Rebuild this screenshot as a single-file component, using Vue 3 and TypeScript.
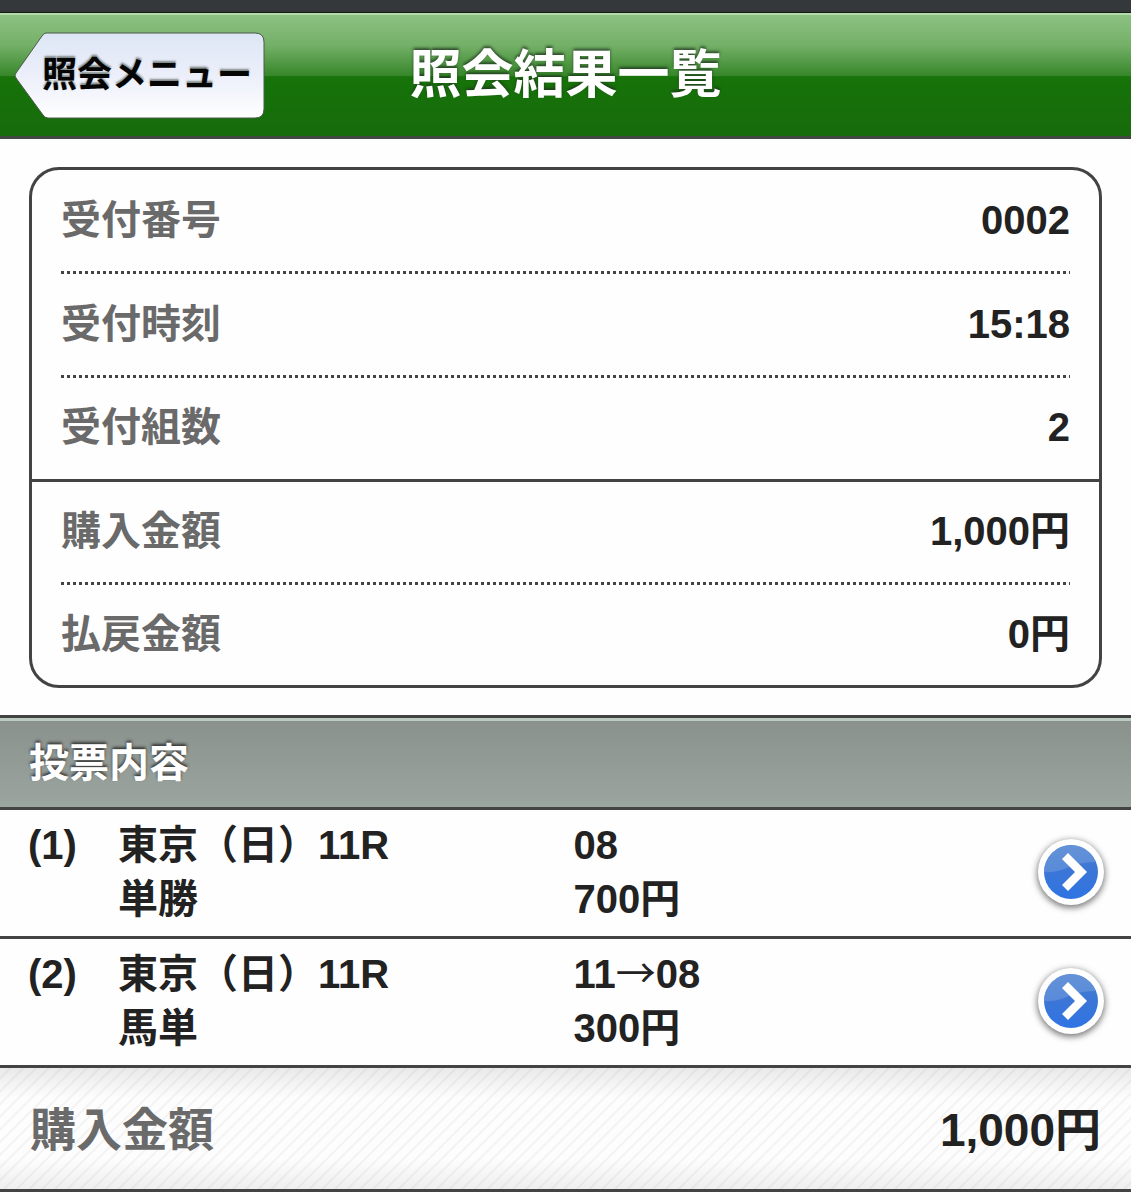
<script setup lang="ts">
interface SummaryItem {
  label: string
  value: string
}

interface Vote {
  no: number
  race: string
  kind: string
  horses: string[]
  amount: string
}

const receipt: SummaryItem[] = [
  { label: '受付番号', value: '0002' },
  { label: '受付時刻', value: '15:18' },
  { label: '受付組数', value: '2' },
]

const money: SummaryItem[] = [
  { label: '購入金額', value: '1,000円' },
  { label: '払戻金額', value: '0円' },
]

const votes: Vote[] = [
  { no: 1, race: '東京（日）11R', kind: '単勝', horses: ['08'], amount: '700円' },
  { no: 2, race: '東京（日）11R', kind: '馬単', horses: ['11', '08'], amount: '300円' },
]
</script>

<template>
  <div class="page">
    <div class="status-strip"></div>
    <header class="header">
      <button type="button" class="back">
        <svg class="back-shape" viewBox="0 0 252 88" aria-hidden="true">
          <defs>
            <linearGradient id="backFill" x1="0" y1="0" x2="0" y2="1">
              <stop offset="0" stop-color="#dde6f5" />
              <stop offset="0.5" stop-color="#eceffa" />
              <stop offset="1" stop-color="#ffffff" />
            </linearGradient>
          </defs>
          <path
            d="M32 1 H241 Q250 1 250 10 V77 Q250 86 241 86 H34 Q31 86 29 83 L2 46 Q0 43 2 41 L28 4 Q30 1 32 1 Z"
            fill="url(#backFill)"
            stroke="#4c5a4c"
            stroke-width="1"
          />
        </svg>
        <span class="back-label">照会メニュー</span>
      </button>
      <h1 class="title">照会結果一覧</h1>
      <span></span>
    </header>

    <main>
      <div class="card">
        <dl class="group receipt">
          <div v-for="item in receipt" :key="item.label" class="item">
            <dt>{{ item.label }}</dt>
            <dd>{{ item.value }}</dd>
          </div>
        </dl>
        <dl class="group money">
          <div v-for="item in money" :key="item.label" class="item">
            <dt>{{ item.label }}</dt>
            <dd>{{ item.value }}</dd>
          </div>
        </dl>
      </div>

      <h2 class="section">投票内容</h2>

      <ul class="votes">
        <li v-for="vote in votes" :key="vote.no" class="vote">
          <span class="no">({{ vote.no }})</span>
          <div>
            <div>{{ vote.race }}</div>
            <div>{{ vote.kind }}</div>
          </div>
          <div>
            <div>
              <template v-for="(horse, i) in vote.horses" :key="horse"><span v-if="i > 0" class="arrow">→</span>{{ horse }}</template>
            </div>
            <div>{{ vote.amount }}</div>
          </div>
          <button type="button" class="detail" :aria-label="`(${vote.no}) ${vote.race}`">
            <svg viewBox="0 0 54 54" aria-hidden="true">
              <defs>
                <linearGradient :id="`disc${vote.no}`" x1="0" y1="0" x2="0" y2="1">
                  <stop offset="0" stop-color="#4a80d2" />
                  <stop offset="0.5" stop-color="#3b76d6" />
                  <stop offset="1" stop-color="#2f74e4" />
                </linearGradient>
                <linearGradient :id="`gloss${vote.no}`" x1="0" y1="0" x2="0" y2="1">
                  <stop offset="0" stop-color="#6f9ad9" />
                  <stop offset="1" stop-color="#6593dc" />
                </linearGradient>
              </defs>
              <circle cx="27" cy="27" r="27" :fill="`url(#disc${vote.no})`" />
              <path
                d="M0 27 A27 27 0 0 1 52 17 Q36 17 25 22 Q13 28 0 27 Z"
                :fill="`url(#gloss${vote.no})`"
                opacity="0.7"
              />
              <path d="M24 8 L43 27 L24 46 L18 40 L31 27 L18 14 Z" fill="#ffffff" />
            </svg>
          </button>
        </li>
      </ul>

      <div class="total">
        <span class="total-label">購入金額</span>
        <span>1,000円</span>
      </div>
    </main>
  </div>
</template>

<style>
body {
  margin: 0;
  background: #fefefe;
}
</style>

<style scoped>
.page {
  font-family: "Liberation Sans", "Noto Sans CJK JP", sans-serif;
  font-size: 40px;
  font-weight: 700;
  line-height: 54px;
  color: #222222;
}

.status-strip {
  height: 12px;
  background: #35383b;
  border-bottom: 1px solid #14200f;
}

.header {
  display: grid;
  grid-template-columns: 1fr auto 1fr;
  align-items: center;
  box-sizing: border-box;
  height: 126px;
  padding: 0 14px;
  border-top: 2px solid #b4dcac;
  border-bottom: 3px solid #414741;
  background: linear-gradient(#8cc182 0%, #74b068 25%, #37872a 50%, #17730a 51%, #166b0a 100%);
}

.back {
  position: relative;
  justify-self: start;
  width: 252px;
  height: 88px;
  padding: 0 0 2px 28px;
  border: 0;
  background: none;
  font: inherit;
  font-size: 35px;
  color: #050505;
  text-align: left;
  white-space: nowrap;
}

.back-shape {
  position: absolute;
  inset: 0;
  width: 100%;
  height: 100%;
}

.back-label {
  position: relative;
  text-shadow: 0 -2px 2px rgba(60, 70, 60, 0.6);
}

.title {
  margin: 0;
  padding-bottom: 2px;
  font-size: 52px;
  line-height: 78px;
  color: #ffffff;
  text-shadow: 0 -2px 3px rgba(30, 50, 30, 0.8);
}

.card {
  margin: 28px 29px 27px;
  border: 3px solid #434343;
  border-radius: 30px;
}

.group {
  margin: 0;
  padding: 0 29px;
}

.receipt {
  border-bottom: 3px solid #434343;
}

.item {
  display: flex;
  justify-content: space-between;
  align-items: center;
  box-sizing: border-box;
  height: 104px;
  padding-bottom: 5px;
}

.money .item {
  height: 103px;
}

.item:last-child {
  height: 101px;
  padding-bottom: 3px;
}

.money .item:last-child {
  height: 100px;
}

.item:not(:last-child) {
  background: repeating-linear-gradient(90deg, #434343 0 3px, transparent 3px 6px) left bottom / 100% 3px no-repeat;
}

.item dt {
  color: #6a6a6a;
}

.item dd {
  margin: 0;
}

.section {
  margin: 0;
  padding: 18px 29px 17px;
  border-top: 3px solid #434343;
  border-bottom: 3px solid #434343;
  background: linear-gradient(#8a918c, #9ba59f);
  box-shadow: inset 0 3px #bccbc2;
  font-size: 40px;
  color: #ffffff;
  text-shadow: 0 -2px 3px rgba(30, 30, 30, 0.8);
}

.votes {
  margin: 0;
  padding: 0;
  list-style: none;
}

.vote {
  display: grid;
  grid-template-columns: 90px 50fr 51fr 66px;
  align-items: center;
  padding: 8px 27px 10px 28px;
  border-bottom: 3px solid #434343;
}

.no {
  align-self: start;
}

.arrow {
  font-family: "Noto Sans CJK JP", sans-serif;
  font-weight: 400;
  line-height: 1;
}

.detail {
  display: block;
  width: 66px;
  height: 66px;
  padding: 6px;
  border: 0;
  border-radius: 50%;
  background: #ffffff;
  box-shadow: 0 2px 6px 1px rgba(0, 0, 0, 0.5);
}

.detail svg {
  display: block;
  width: 54px;
  height: 54px;
}

.total {
  display: flex;
  justify-content: space-between;
  padding: 35px 30px 32px;
  border-bottom: 3px solid #434343;
  background:
    linear-gradient(rgba(0, 0, 0, 0.08), transparent 25%, transparent 75%, rgba(0, 0, 0, 0.06)),
    repeating-linear-gradient(135deg, #fdfdfd 0 6px, #f3f3f3 7px 8px, #fdfdfd 9px);
  font-size: 46px;
}

.total-label {
  color: #6a6a6a;
}
</style>
